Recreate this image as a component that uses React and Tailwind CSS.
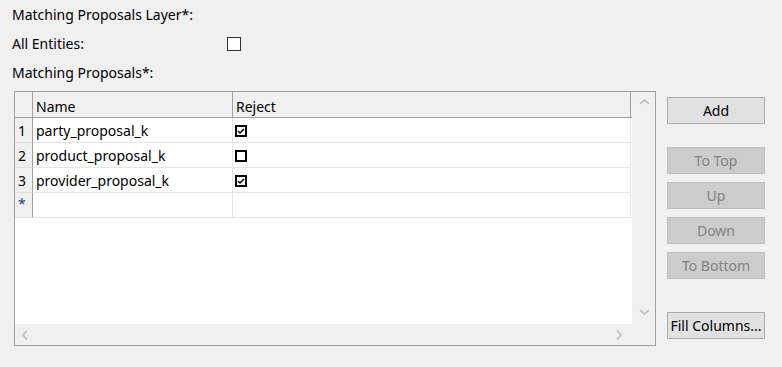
// Matching proposals editor panel
const rows = [
  { n: "1", name: "party_proposal_k", reject: true },
  { n: "2", name: "product_proposal_k", reject: false },
  { n: "3", name: "provider_proposal_k", reject: true },
];

const GridCheck = ({ checked }) => (
  <svg width="12" height="12" viewBox="0 0 12 12" className="block">
    <rect x="1" y="1" width="10" height="10" fill="#fff" stroke="#000" strokeWidth="2" />
    {checked && <path d="M3 6l2 2 4-4" fill="none" stroke="#000" strokeWidth="1.5" />}
  </svg>
);

const Chevron = ({ dir }) => {
  const d = {
    up: "M1 6l4.5-4 4.5 4",
    down: "M1 3l4.5 4 4.5-4",
    left: "M7 0.5L3 5l4 4.5",
    right: "M3 0.5L7 5l-4 4.5",
  }[dir];
  return (
    <svg width="10" height="10" viewBox="0 0 10 10" className="block">
      <path d={d} fill="none" stroke="#bdbdbd" strokeWidth="1.6" />
    </svg>
  );
};

const Btn = ({ children, disabled, className = "" }) => (
  <button
    disabled={disabled}
    className={
      "w-[98px] h-[27px] border text-[14px] leading-none pt-[1px] " +
      (disabled
        ? "bg-[#cccccc] border-[#bfbfbf] text-[#838383] "
        : "bg-[#e1e1e1] border-[#adadad] text-black ") +
      className
    }
  >
    {children}
  </button>
);

export default function App() {
  return (
    <div
      className="w-[782px] h-[367px] bg-[#f0f0f0] text-[14px] text-black overflow-hidden"
      style={{ fontFamily: '"Noto Sans", "Segoe UI", sans-serif' }}
    >
      <div className="pl-[12px]">
        <div className="h-[29px] flex items-center">Matching Proposals Layer*:</div>
        <div className="h-[29px] flex items-center">
          <span className="w-[215px]">All Entities:</span>
          <span className="w-[14px] h-[14px] border border-[#333] bg-white" />
        </div>
        <div className="h-[29px] flex items-center">Matching Proposals*:</div>
      </div>

      <div className="flex mt-[4px]">
        {/* grid frame */}
        <div className="ml-[14px] w-[642px] h-[255px] border border-[#a0a0a0] flex flex-col">
          <div className="flex flex-1 min-h-0">
            <div className="w-[617px] bg-white">
              {/* header */}
              <div className="flex h-[26px] bg-[#f0f0f0] border-b border-[#a0a0a0] pt-[2px]">
                <div className="w-[18px] border-r border-[#a0a0a0] -mt-[2px]" />
                <div className="w-[200px] border-r border-[#a0a0a0] pl-[3px] flex items-center -mt-[2px] pt-[3px]">Name</div>
                <div className="w-[398px] border-r border-[#a0a0a0] pl-[3px] flex items-center -mt-[2px] pt-[3px]">Reject</div>
              </div>
              {rows.map((r) => (
                <div key={r.n} className="flex h-[25px]">
                  <div className="w-[18px] bg-[#f0f0f0] border-r border-b border-[#a0a0a0] border-b-[#e0e0e0] flex items-center pl-[3px] pt-[1px]">
                    {r.n}
                  </div>
                  <div className="w-[200px] border-r border-b border-[#e5e5e5] pl-[3px] pt-[1px] flex items-center">{r.name}</div>
                  <div className="w-[398px] border-r border-b border-[#e5e5e5] pl-[2px] pt-[1px] flex items-center">
                    <GridCheck checked={r.reject} />
                  </div>
                </div>
              ))}
              <div className="flex h-[25px]">
                <div className="w-[18px] bg-[#f0f0f0] border-r border-b border-[#a0a0a0] border-b-[#e0e0e0] pl-[3px] pt-[4px] text-[#1c3f7a] leading-none text-[14px]">
                  *
                </div>
                <div className="w-[200px] border-r border-b border-[#e5e5e5]" />
                <div className="w-[398px] border-r border-b border-[#e5e5e5]" />
              </div>
            </div>
            {/* vertical scrollbar */}
            <div className="w-[23px] bg-[#f0f0f0] flex flex-col items-center justify-between pt-[6px] pb-[7px]">
              <Chevron dir="up" />
              <Chevron dir="down" />
            </div>
          </div>
          {/* horizontal scrollbar */}
          <div className="h-[21px] bg-[#f0f0f0] flex items-center justify-between pl-[5px] pr-[31px]">
            <Chevron dir="left" />
            <Chevron dir="right" />
          </div>
        </div>

        {/* buttons */}
        <div className="ml-[11px] flex flex-col">
          <Btn className="mt-[6px]">Add</Btn>
          <div className="mt-[23px] flex flex-col gap-[8px]">
            <Btn disabled>To Top</Btn>
            <Btn disabled>Up</Btn>
            <Btn disabled>Down</Btn>
            <Btn disabled>To Bottom</Btn>
          </div>
          <Btn className="mt-[33px]">Fill Columns...</Btn>
        </div>
      </div>
    </div>
  );
}
